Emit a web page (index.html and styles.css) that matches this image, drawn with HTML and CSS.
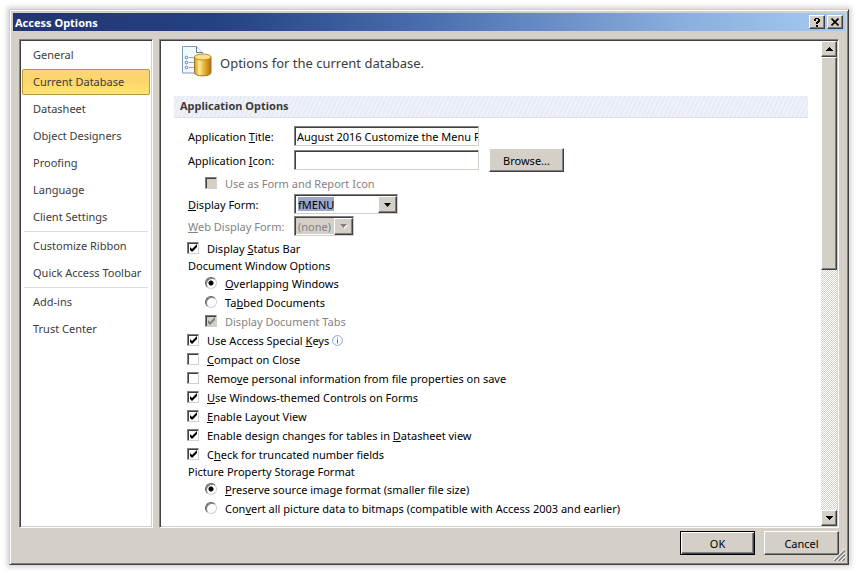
FILE: index.html
```
<!DOCTYPE html>
<html lang="en">
<head>
    <meta charset="UTF-8">
    <title>Access Options</title>
    <link rel="stylesheet" href="styles.css">
</head>
<body>
    <div class="window">
        <div class="titlebar">
            <h1>Access Options</h1>
            <button type="button" class="caption-button" aria-label="Help">
                <svg width="8" height="9" viewBox="0 0 8 9" shape-rendering="crispEdges"><path d="M2 0h4v1h1v3h-1v1h-1v1h-2v-2h1v-1h1v-2h-2v2h-2v-2h1zM3 7h2v2h-2z"/></svg>
            </button>
            <button type="button" class="caption-button caption-close" aria-label="Close">
                <svg width="8" height="8" viewBox="0 0 8 8"><path d="M0.5 0.5l7 7M7.5 0.5l-7 7" stroke="#000" stroke-width="1.7"/></svg>
            </button>
        </div>

        <div class="panels">
            <!-- Categories -->
            <nav class="panel categories">
                <a href="#">General</a>
                <a href="#" class="selected">Current Database</a>
                <a href="#">Datasheet</a>
                <a href="#">Object Designers</a>
                <a href="#">Proofing</a>
                <a href="#">Language</a>
                <a href="#">Client Settings</a>
                <hr>
                <a href="#">Customize Ribbon</a>
                <a href="#">Quick Access Toolbar</a>
                <hr>
                <a href="#">Add-ins</a>
                <a href="#">Trust Center</a>
            </nav>

            <!-- Options for the selected category -->
            <div class="panel content">
                <form class="options" id="options">
                    <div class="intro">
                        <svg width="31" height="32" viewBox="0 0 31 32">
                            <defs>
                                <linearGradient id="gold">
                                    <stop offset="0" stop-color="#d29a20"/>
                                    <stop offset="0.3" stop-color="#ffeb9a"/>
                                    <stop offset="0.55" stop-color="#f0b93a"/>
                                    <stop offset="1" stop-color="#b06f10"/>
                                </linearGradient>
                            </defs>
                            <path d="M0.5 0.5h14l6 6v20.500h-20z" fill="#f3f8fd" stroke="#7c9bbd"/>
                            <path d="M14.500 0.500v6h6" fill="#fff" stroke="#5b7ca3"/>
                            <g fill="#fff" stroke="#5f7f9f"><circle cx="4.500" cy="11.500" r="1.300"/><circle cx="4.500" cy="16.500" r="1.300"/><circle cx="4.500" cy="21.500" r="1.300"/></g>
                            <path d="M7 11.500h6M7 16.500h6M7 21.500h6" stroke="#8faac6"/>
                            <path d="M12.500 11v15.500c0 4.500 16.500 4.500 16.500 0v-15.500z" fill="url(#gold)" stroke="#a87418"/>
                            <ellipse cx="20.750" cy="11" rx="8.250" ry="3" fill="#ffe08a" stroke="#c08a22"/>
                        </svg>
                        <p>Options for the current database.</p>
                    </div>

                    <h2>Application Options</h2>

                    <div class="fields">
                        <div class="field">
                            <label for="app-title">Application <u>T</u>itle:</label>
                            <input type="text" id="app-title" value="August 2016 Customize the Menu Form">
                        </div>
                        <div class="field">
                            <label for="app-icon">Application <u>I</u>con:</label>
                            <input type="text" id="app-icon">
                            <button type="button" class="button">Browse...</button>
                        </div>
                        <div class="check indent disabled">
                            <input type="checkbox" id="form-icon" disabled>
                            <label for="form-icon">Use as Form and Report Icon</label>
                        </div>
                        <div class="field compact">
                            <label for="display-form"><u>D</u>isplay Form:</label>
                            <span class="combo wide">
                                <select id="display-form"><option>fMENU</option></select>
                            </span>
                        </div>
                        <div class="field compact disabled">
                            <label for="web-form"><u>W</u>eb Display Form:</label>
                            <span class="combo">
                                <select id="web-form" disabled><option>(none)</option></select>
                            </span>
                        </div>
                        <div class="check">
                            <input type="checkbox" id="status-bar" checked>
                            <label for="status-bar">Display <u>S</u>tatus Bar</label>
                        </div>

                        <h3>Document Window Options</h3>
                        <div class="check indent">
                            <input type="radio" name="windows" id="overlapping" checked>
                            <label for="overlapping"><u>O</u>verlapping Windows</label>
                        </div>
                        <div class="check indent">
                            <input type="radio" name="windows" id="tabbed">
                            <label for="tabbed">Ta<u>b</u>bed Documents</label>
                        </div>
                        <div class="check indent disabled">
                            <input type="checkbox" id="tabs" checked disabled>
                            <label for="tabs">Display Document Tabs</label>
                        </div>
                        <div class="check">
                            <input type="checkbox" id="keys" checked>
                            <label for="keys">Use Access Special <u>K</u>eys</label>
                            <svg class="info" width="11" height="11" viewBox="0 0 11 11"><circle cx="5.500" cy="5.500" r="4.900" fill="#fff" stroke="#86a6dc"/><path d="M5 2.500h1v1h-1zM5 4.500h1v4h-1z" fill="#3f68b8"/></svg>
                        </div>
                        <div class="check">
                            <input type="checkbox" id="compact">
                            <label for="compact"><u>C</u>ompact on Close</label>
                        </div>
                        <div class="check">
                            <input type="checkbox" id="personal">
                            <label for="personal">Remo<u>v</u>e personal information from file properties on save</label>
                        </div>
                        <div class="check">
                            <input type="checkbox" id="themed" checked>
                            <label for="themed"><u>U</u>se Windows-themed Controls on Forms</label>
                        </div>
                        <div class="check">
                            <input type="checkbox" id="layout" checked>
                            <label for="layout"><u>E</u>nable Layout View</label>
                        </div>
                        <div class="check">
                            <input type="checkbox" id="design" checked>
                            <label for="design">Enable design changes for tables in <u>D</u>atasheet view</label>
                        </div>
                        <div class="check">
                            <input type="checkbox" id="truncated" checked>
                            <label for="truncated">C<u>h</u>eck for truncated number fields</label>
                        </div>

                        <h3>Picture Property Storage Format</h3>
                        <div class="check indent">
                            <input type="radio" name="picture" id="preserve" checked>
                            <label for="preserve"><u>P</u>reserve source image format (smaller file size)</label>
                        </div>
                        <div class="check indent">
                            <input type="radio" name="picture" id="convert">
                            <label for="convert">Con<u>v</u>ert all picture data to bitmaps (compatible with Access 2003 and earlier)</label>
                        </div>
                    </div>
                </form>

                <div class="scrollbar">
                    <button type="button" class="scroll-button" aria-label="Scroll up">
                        <svg width="7" height="4" viewBox="0 0 7 4" shape-rendering="crispEdges"><path d="M3 0h1v1h1v1h1v1h1v1h-7v-1h1v-1h1v-1h1z"/></svg>
                    </button>
                    <div class="track"><div class="thumb"></div></div>
                    <button type="button" class="scroll-button" aria-label="Scroll down">
                        <svg width="7" height="4" viewBox="0 0 7 4" shape-rendering="crispEdges"><path d="M0 0h7v1h-1v1h-1v1h-1v1h-1v-1h-1v-1h-1v-1h-1z"/></svg>
                    </button>
                </div>
            </div>
        </div>

        <div class="footer">
            <button type="submit" form="options" class="button default">OK</button>
            <button type="button" class="button">Cancel</button>
        </div>
        <svg class="grip" width="12" height="12" viewBox="0 0 12 12">
            <path d="M0 11.500L11.500 0M4 12L12 4M8 12L12 8" stroke="#fff"/>
            <path d="M1.500 12L12 1.500M5.500 12L12 5.500M9.500 12L12 9.500" stroke="#808080" stroke-width="1.500"/>
        </svg>
    </div>
</body>
</html>
```
FILE: styles.css
```
* {
    box-sizing: border-box;
}

body {
    margin: 0;
    height: 100vh;
    padding: 9px 8px 8px 9px;
    display: flex;
    background-color: #fff;
    font-family: "Noto Sans", "Open Sans", sans-serif;
    font-size: 11px;
    line-height: 15px;
    color: #000;
}

button, input, select {
    font: inherit;
    color: inherit;
    margin: 0;
}

h1, h2, h3, p {
    margin: 0;
    font-size: 11px;
}

/* Window frame */
.window {
    position: relative;
    flex: 1;
    display: flex;
    flex-direction: column;
    min-width: 0;
    padding: 3px;
    background-color: #d4d0c8;
    border: 1px solid;
    border-color: #d4d0c8 #404040 #404040 #d4d0c8;
    box-shadow: inset 1px 1px #fff, inset -1px -1px #808080, 0 0 5px 2px #d2d2d6;
}

.titlebar {
    display: flex;
    align-items: center;
    height: 18px;
    padding: 0 2px;
    background: linear-gradient(to right, #22356f, #254283 25%, #4a6fae 50%, #88aede 80%, #a6caf0);
}

.titlebar h1 {
    flex: 1;
    color: #fff;
}

.caption-button {
    display: flex;
    align-items: center;
    justify-content: center;
    width: 16px;
    height: 14px;
    padding: 0;
}

.caption-close {
    margin-left: 2px;
}

.caption-button, .scroll-button, .thumb, .button {
    background-color: #d4d0c8;
    border: 1px solid;
    border-color: #fff #404040 #404040 #fff;
    box-shadow: inset -1px -1px #808080;
}

/* Panels */
.panels {
    flex: 1;
    display: flex;
    gap: 6px;
    min-height: 0;
    padding: 8px 6px 0;
}

.panel {
    background-color: #fff;
    border: 1px solid;
    border-color: #808080 #fff #fff #808080;
    box-shadow: inset 1px 1px #404040, inset -1px -1px #d4d0c8;
}

.categories {
    flex: none;
    display: flex;
    flex-direction: column;
    width: 134px;
    padding: 2px;
}

.categories a {
    height: 26px;
    margin-bottom: 1px;
    padding: 5px 10px;
    line-height: 14px;
    border: 1px solid transparent;
    border-radius: 2px;
    color: #3b3b3b;
    text-decoration: none;
    white-space: nowrap;
}

.categories a.selected {
    background: linear-gradient(#fbd67a, #fdd568 45%, #ffe475);
    border-color: #c29331;
}

.categories hr {
    width: 124px;
    margin: 0 auto 1px;
    border: 0;
    border-top: 1px solid #dcdde4;
}

.content {
    flex: 1;
    display: flex;
    min-width: 0;
    padding: 1px;
}

.options {
    flex: 1;
    min-width: 0;
    overflow: hidden;
    padding: 0 13px;
}

.intro {
    display: flex;
    align-items: flex-start;
    gap: 7px;
    height: 55px;
    padding: 5px 8px;
}

.intro p {
    padding-top: 8px;
    font-size: 13px;
    line-height: 18px;
    color: #3b3b3b;
}

.options h2 {
    height: 22px;
    padding: 0 6px;
    line-height: 20px;
    color: #3b3b3b;
    background: repeating-linear-gradient(115deg, #e6ecf7 0 2px, #f1f2f8 2px 4px);
    border-bottom: 1px solid #dde1e8;
}

.options h3 {
    height: 16px;
    line-height: 16px;
    font-weight: normal;
}

.fields {
    padding: 6px 0 0 14px;
    white-space: nowrap;
}

.field {
    display: flex;
    align-items: center;
    height: 24px;
}

.field.compact {
    height: 22px;
}

.field + .check {
    margin-top: 2px;
}

.field label {
    flex: none;
    width: 106px;
}

.disabled {
    color: #848284;
}

.field input, .combo {
    height: 20px;
    background-color: #fff;
    border: 1px solid;
    border-color: #808080 #d4d0c8 #d4d0c8 #808080;
    box-shadow: inset 1px 1px #404040;
}

.field input {
    width: 185px;
    padding: 0 0 0 2px;
    border-radius: 0;
}

.field .button {
    margin-left: 10px;
}

.button {
    width: 75px;
    height: 24px;
    padding: 0;
}

/* Drop-downs */
.combo {
    position: relative;
    display: flex;
    width: 60px;
    padding: 1px;
}

.combo.wide {
    width: 104px;
}

.combo select {
    appearance: none;
    width: 100%;
    padding: 0 16px 0 2px;
    border: 0;
    border-radius: 0;
    background: linear-gradient(#9ba8cc, #9ba8cc) 2px 1px / 36px 14px no-repeat;
    opacity: 1;
}

.combo select:disabled {
    background: #d4d0c8;
}

.combo::after {
    content: "";
    position: absolute;
    top: 1px;
    right: 0;
    bottom: 0;
    width: 17px;
    border: 1px solid;
    border-color: #fff #404040 #404040 #fff;
    box-shadow: inset -1px -1px #808080;
    background: #d4d0c8 url("data:image/svg+xml,%3Csvg xmlns='http://www.w3.org/2000/svg' width='7' height='4'%3E%3Cpath d='M0 0h7L3.500 4z'/%3E%3C/svg%3E") center no-repeat;
    pointer-events: none;
}

.disabled .combo::after {
    background-image: url("data:image/svg+xml,%3Csvg xmlns='http://www.w3.org/2000/svg' width='8' height='5'%3E%3Cpath d='M1 1h7L4.500 5z' fill='%23fff'/%3E%3Cpath d='M0 0h7L3.500 4z' fill='%23808080'/%3E%3C/svg%3E");
}

/* Tick boxes and radio buttons */
.check {
    display: flex;
    align-items: center;
    height: 19px;
}

.check.indent {
    padding-left: 18px;
}

.check input {
    appearance: none;
    flex: none;
    width: 12px;
    height: 12px;
    margin: 0 8px 2px -1px;
    background: #fff center no-repeat;
}

.check input[type="checkbox"] {
    border: 1px solid;
    border-color: #808080 #d4d0c8 #d4d0c8 #808080;
    box-shadow: inset 1px 1px #404040;
}

.check input[type="checkbox"]:checked {
    background-image: url("data:image/svg+xml,%3Csvg xmlns='http://www.w3.org/2000/svg' width='8' height='8'%3E%3Cpath d='M1 3l2 2 5-5v3L3 8 1 6z'/%3E%3C/svg%3E");
}

.check input[type="checkbox"]:disabled {
    background-color: #d4d0c8;
}

.check input[type="checkbox"]:checked:disabled {
    background-image: url("data:image/svg+xml,%3Csvg xmlns='http://www.w3.org/2000/svg' width='8' height='8'%3E%3Cpath d='M1 3l2 2 5-5v3L3 8 1 6z' fill='%23808080'/%3E%3C/svg%3E");
}

.check input[type="radio"] {
    border: 1px solid;
    border-color: #606060 #d4d0c8 #d4d0c8 #606060;
    border-radius: 50%;
    box-shadow: inset 1px 1px #808080;
}

.check input[type="radio"]:checked {
    background-image: radial-gradient(circle, #000 2px, transparent 3px);
}

.info {
    margin-left: 3px;
}

/* Scroll bar */
.scrollbar {
    flex: none;
    display: flex;
    flex-direction: column;
    width: 16px;
}

.scroll-button {
    display: flex;
    align-items: center;
    justify-content: center;
    height: 16px;
    padding: 0;
}

.track {
    flex: 1;
    background: repeating-conic-gradient(#d4d0c8 0 25%, #fff 0 50%) 0 0 / 2px 2px;
}

.thumb {
    height: 47%;
}

/* Bottom buttons */
.footer {
    display: flex;
    justify-content: flex-end;
    gap: 9px;
    padding: 3px 6px 6px;
}

.button.default {
    border-color: #000;
    box-shadow: inset 1px 1px #fff, inset -1px -1px #404040, inset -2px -2px #808080;
}

.grip {
    position: absolute;
    right: 3px;
    bottom: 3px;
}
```
